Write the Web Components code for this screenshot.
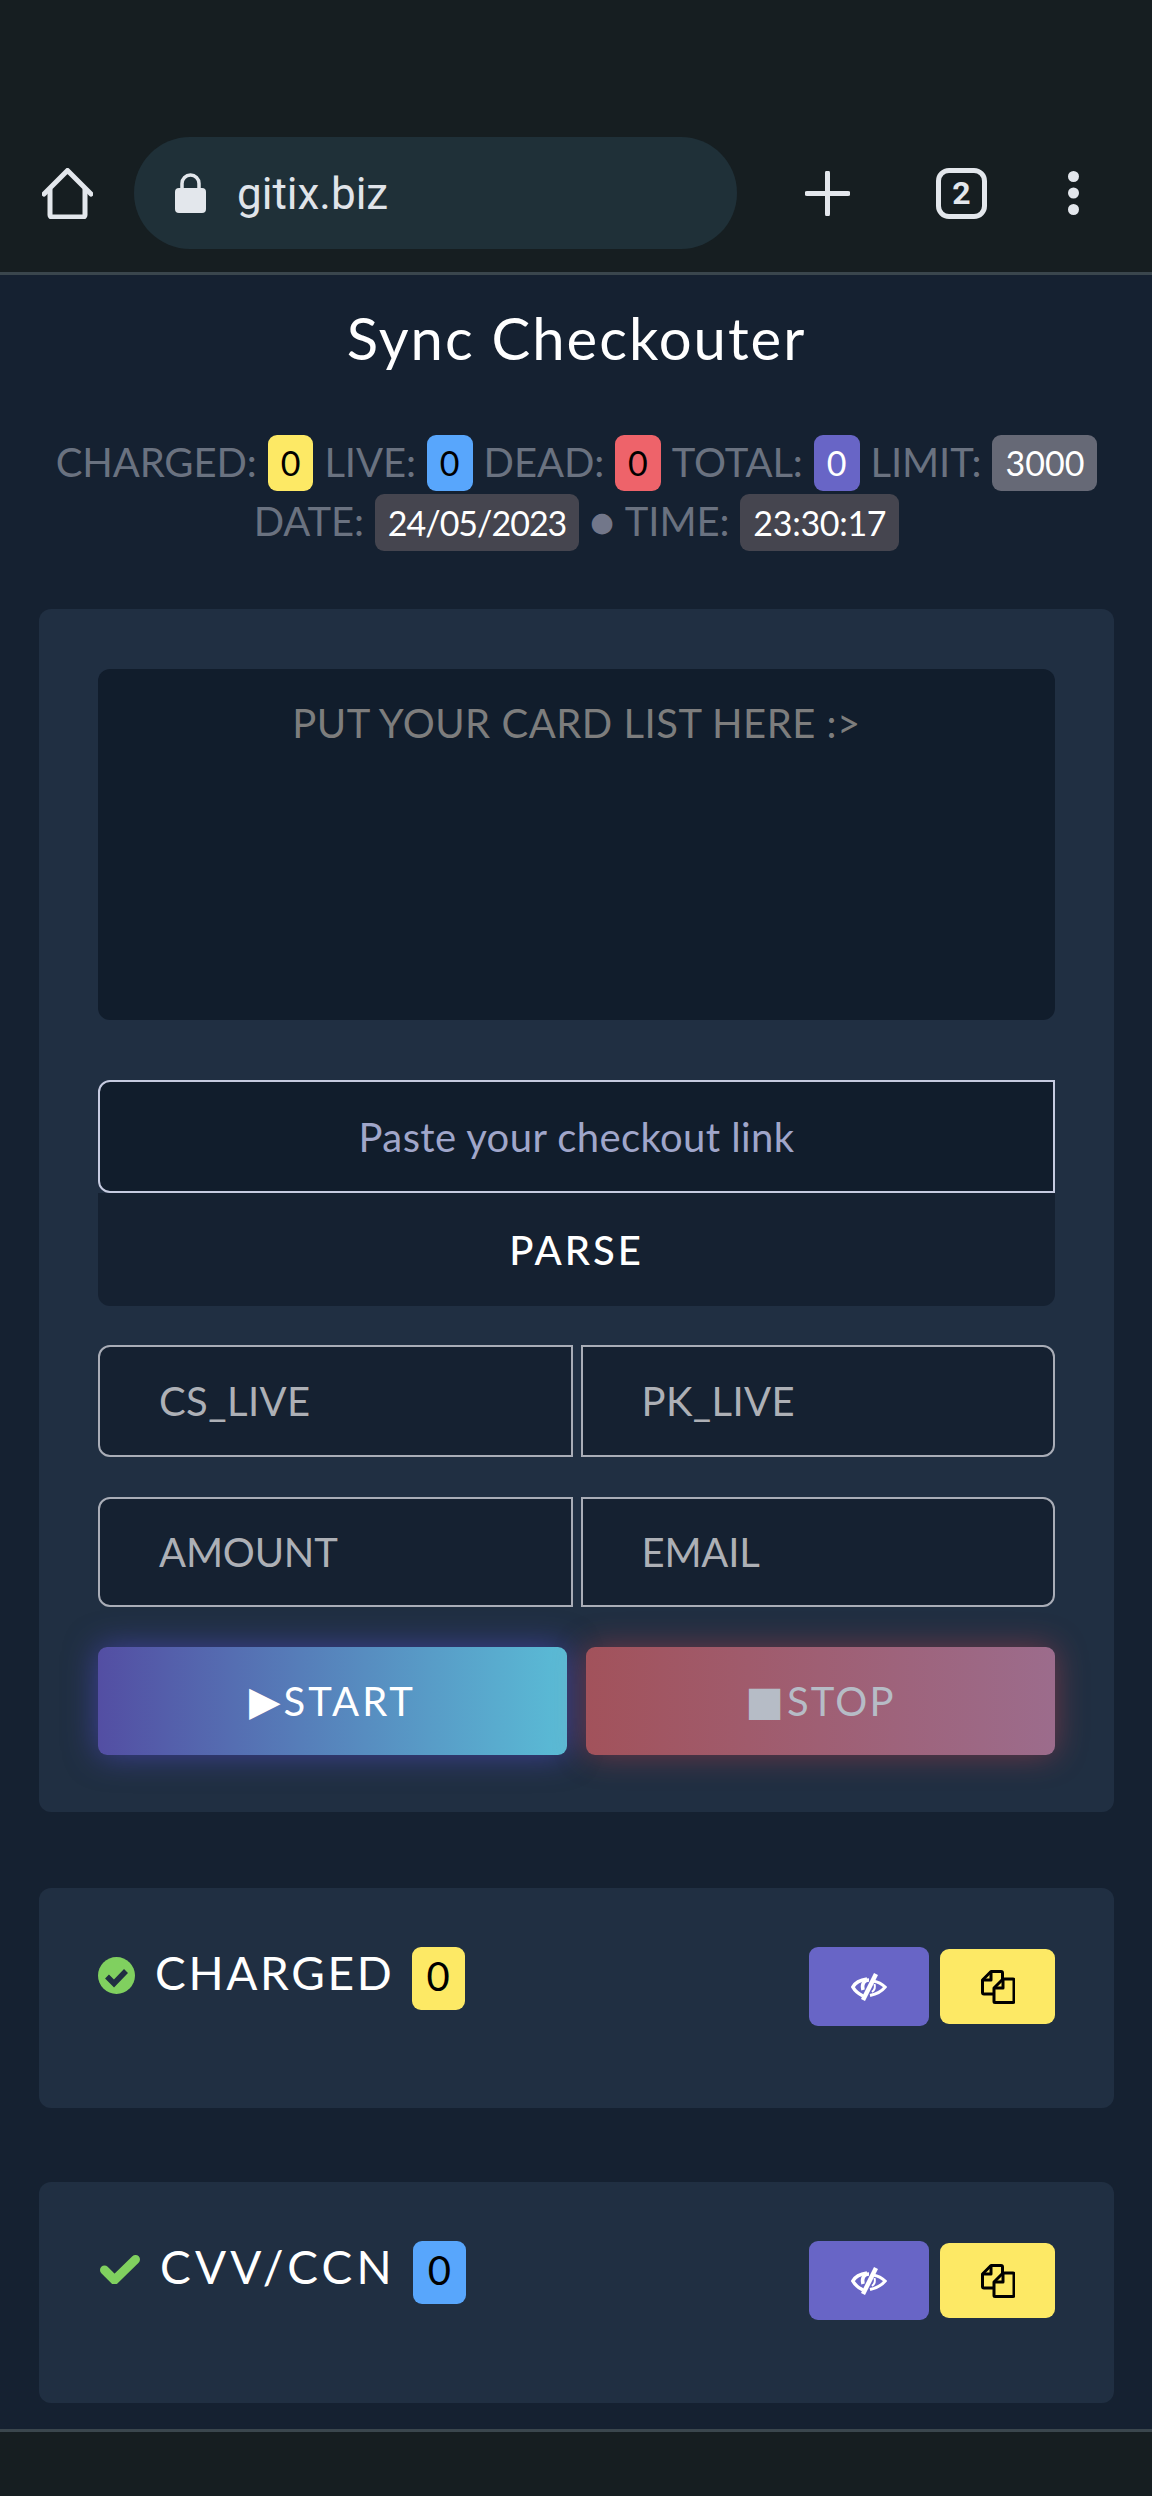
<!DOCTYPE html>
<html><head><meta charset="utf-8"><style>
html,body{margin:0;padding:0;background:#152131;}
body{width:1152px;height:2496px;overflow:hidden;display:flex;flex-direction:column;font-family:Lato,"Open Sans",sans-serif;font-weight:300;color:#fff;}
</style></head><body>
<browser-bar></browser-bar>
<main-page>
  <h-title>Sync Checkouter</h-title>
  <stat-row>
    <stat-label>CHARGED:</stat-label><stat-badge kind="yellow">0</stat-badge>
    <stat-label>LIVE:</stat-label><stat-badge kind="blue">0</stat-badge>
    <stat-label>DEAD:</stat-label><stat-badge kind="red">0</stat-badge>
    <stat-label>TOTAL:</stat-label><stat-badge kind="purple">0</stat-badge>
    <stat-label>LIMIT:</stat-label><stat-badge kind="gray">3000</stat-badge>
  </stat-row>
  <stat-row second>
    <stat-label>DATE:</stat-label><stat-badge kind="dark" style="letter-spacing:-1px">24/05/2023</stat-badge>
    <stat-label dot>●</stat-label>
    <stat-label>TIME:</stat-label><stat-badge kind="dark" style="letter-spacing:-.3px">23:30:17</stat-badge>
  </stat-row>
  <form-card></form-card>
  <result-panel icon="circle" label="CHARGED" ls="2.7" kind="yellow" style="margin-top:76px;height:220px"></result-panel>
  <result-panel icon="check" label="CVV/CCN" ls="4.2" kind="blue" style="margin-top:74px;height:221px"></result-panel>
</main-page>
<bottom-bar></bottom-bar>
<script>
function def(name,html,setup){customElements.define(name,class extends HTMLElement{constructor(){super();const r=this.attachShadow({mode:'open'});r.innerHTML=typeof html==='function'?html(this):html;}connectedCallback(){if(setup)setup(this);}});}

def('browser-bar',`<style>
:host{display:flex;align-items:flex-end;background:#161e21;border-bottom:3px solid #3a464d;flex:none;padding:0 0 23px 0;box-sizing:content-box;height:249px;color:#e3e7ec}
.wrap{display:flex;align-items:center;height:112px;width:100%}
svg{display:block;flex:none}
.home{margin-left:42px}
.pill{margin-left:41px;width:603px;height:112px;border-radius:56px;background:#1f3038;display:flex;align-items:center;box-sizing:border-box;padding-left:41px}
.url{font:400 44px Roboto,sans-serif;color:#e0e4ea;margin-left:31px;margin-top:2px}
.plus{margin-left:68px}.dots{margin-left:81px}
.tabs{margin-left:86px;width:51px;height:51px;border:5px solid #e3e7ec;border-radius:13px;box-sizing:border-box;display:flex;align-items:center;justify-content:center;font:700 32px Roboto,sans-serif;color:#e3e7ec;flex:none}
</style><div class="wrap">
<svg class="home" width="51" height="51" viewBox="0 0 51 51"><path d="M2 26 25.500 2.500 49 26" fill="none" stroke="#e3e7ec" stroke-width="5" stroke-linecap="round" stroke-linejoin="round"/><path d="M8 21v26a2 2 0 0 0 2 2h31a2 2 0 0 0 2-2V21" fill="none" stroke="#e3e7ec" stroke-width="5" stroke-linejoin="round"/></svg>
<div class="pill"><svg width="31" height="40" viewBox="0 0 31 40"><path d="M7 17V10.500a8.500 8.500 0 0 1 17 0V17" fill="none" stroke="#e3e7ec" stroke-width="3.500"/><rect x="0" y="15" width="31" height="25" rx="4" fill="#e3e7ec"/></svg><span class="url">gitix.biz</span></div>
<svg class="plus" width="45" height="45" viewBox="0 0 45 45"><path d="M22.500 2v41M2 22.500h41" stroke="#e3e7ec" stroke-width="5" stroke-linecap="round"/></svg>
<div class="tabs">2</div>
<svg class="dots" width="11" height="44" viewBox="0 0 11 44"><circle cx="5.500" cy="5.500" r="5.500" fill="#e3e7ec"/><circle cx="5.500" cy="22" r="5.500" fill="#e3e7ec"/><circle cx="5.500" cy="38.500" r="5.500" fill="#e3e7ec"/></svg>
</div>`);

def('main-page',`<style>:host{display:flex;flex-direction:column;flex:1;padding:0 38px 0 39px;min-height:0}</style><slot></slot>`);
def('bottom-bar',`<style>:host{display:block;background:#161e21;border-top:3px solid #3a464d;flex:none;box-sizing:content-box;height:64px}</style>`);
def('h-title',`<style>:host{display:block;text-align:center;font:400 58px/1 Lato,sans-serif;color:#fff;padding-top:34px;height:124px;box-sizing:border-box;letter-spacing:2px}</style><slot></slot>`);
def('stat-row',e=>`<style>:host{display:flex;justify-content:center;align-items:center;gap:11px;height:${e.hasAttribute('second')?57:56}px;margin-top:${e.hasAttribute('second')?3:36}px;margin-bottom:${e.hasAttribute('second')?58:0}px}</style><slot></slot>`);
def('stat-label',`<style>:host{display:block;font:400 40px/1 Lato,sans-serif;color:#6a7280;letter-spacing:-.1px;white-space:nowrap;padding-bottom:3px}</style><slot></slot>`,e=>{if(e.hasAttribute('dot')){e.style.cssText='font-size:27px;color:#72778a;font-family:"DejaVu Sans",sans-serif;padding:0 0 2px;margin:0'}});
const badge={yellow:['#fde965','#000'],blue:['#58a6fc','#000'],red:['#ee636a','#000'],purple:['#6865c6','#fff'],gray:['#666976','#fff'],dark:['#45454f','#fff']};
def('stat-badge',e=>{const[b,c]=badge[e.getAttribute('kind')];return `<style>:host{display:flex;align-items:center;justify-content:center;height:100%;min-width:45px;box-sizing:border-box;padding:0 13px;background:${b};color:${c};font:400 34px/1 Lato,sans-serif;border-radius:9px}</style><slot></slot>`});

def('form-card',`<style>
:host{display:flex;flex-direction:column;background:#202f42;border-radius:12px;height:1203px;box-sizing:border-box;padding:60px 59px 0 59px;font:400 40px/1 Lato,sans-serif}
.ta{height:351px;background:#111d2c;border-radius:12px;text-align:center;color:#7d7d7d;padding-top:34px;box-sizing:border-box;letter-spacing:.5px}
.link{margin-top:60px;height:113px;background:#111d2c;border:2.500px solid #c6cbe0;border-radius:12px 0 0 12px;box-sizing:border-box;display:flex;align-items:center;justify-content:center;color:#a0a6ca;letter-spacing:.4px}
.parse{height:113px;background:#152131;border-radius:0 0 12px 12px;display:flex;align-items:center;justify-content:center;font-weight:500;color:#fff;letter-spacing:3px}
.row{display:flex;gap:8px}
.row.a{margin-top:39px;height:112px}.row.b{margin-top:40px;height:110px}
.f{flex:1;background:#152131;border:2.500px solid #a9adb7;box-sizing:border-box;display:flex;align-items:center;padding-left:59px;color:#adb0b6;letter-spacing:.4px}
.row.b .f{letter-spacing:-.2px}
.f.l{border-radius:12px 0 0 12px}.f.r{border-radius:0 12px 12px 0}
.btns{display:flex;gap:19px;margin-top:40px;height:108px}
</style>
<div class="ta">PUT YOUR CARD LIST HERE :&gt;</div>
<div class="link">Paste your checkout link</div>
<div class="parse">PARSE</div>
<div class="row a"><div class="f l">CS_LIVE</div><div class="f r">PK_LIVE</div></div>
<div class="row b"><div class="f l">AMOUNT</div><div class="f r">EMAIL</div></div>
<div class="btns"><glow-btn kind="start" glyph="▶">START</glow-btn><glow-btn kind="stop" glyph="■">STOP</glow-btn></div>`);

def('glow-btn',e=>{const s=e.getAttribute('kind')==='start';return `<style>
:host{flex:1;display:flex;align-items:center;justify-content:center;border-radius:9px;font:400 40px/1 Lato,sans-serif;letter-spacing:${s?3:2.2}px;
background:${s?'linear-gradient(90deg,#534ea3,#5abcd6)':'linear-gradient(90deg,#a2525b,#9c6c8c)'};
box-shadow:0 0 32px ${s?'rgba(83,78,210,.6)':'rgba(225,70,80,.42)'};color:${s?'#fff':'#b6bcc6'}}
i{font:400 41px/1 "DejaVu Sans",sans-serif;letter-spacing:0;margin-right:3px}
</style><i>${e.getAttribute('glyph')}</i><slot></slot>`});

def('result-panel',e=>{const [b,c]=badge[e.getAttribute('kind')];const circle=e.getAttribute('icon')==='circle';
const ic=circle?`<svg width="37" height="37" viewBox="0 0 37 37" style="margin-right:20px"><circle cx="18.500" cy="18.500" r="18.500" fill="#80d05f"/><path d="M9 19.500l7 7 12-12.500" fill="none" stroke="#202f42" stroke-width="5.500"/></svg>`
:`<svg width="40" height="29" viewBox="0 0 40 29" style="margin-right:20px;margin-left:2px"><path d="M4.500 15l10 10L35.500 4.500" fill="none" stroke="#80d05f" stroke-width="9" stroke-linejoin="round" stroke-linecap="round"/></svg>`;
const eye=`<svg style="margin:0" width="36" height="28" viewBox="0 0 36 28"><path d="M16 6C9 7 4 10 1.800 14 4 18 8 21 12 23" fill="none" stroke="#fff" stroke-width="3.500"/><path d="M22 8c5 1 9 3 12.200 6C31 18 26 21 19 22.500" fill="none" stroke="#fff" stroke-width="3"/><path d="M25 1 12 27" stroke="#fff" stroke-width="4.500"/><path d="M18 7c-5 0-7.500 4-6 10" fill="none" stroke="#fff" stroke-width="3.500"/><path d="M23.500 11c1 3 0 6-2.500 8" fill="none" stroke="#fff" stroke-width="2"/></svg>`;
const copy=`<svg style="margin:0" width="34" height="34" viewBox="0 0 34 34"><path d="M12 24H3a1.500 1.500 0 0 1-1.500-1.500V10L10 1.500h10A1.500 1.500 0 0 1 21.500 3v6" fill="none" stroke="#000" stroke-width="3" stroke-linejoin="round"/><path d="M10 1.500V10H1.500" fill="none" stroke="#000" stroke-width="3" stroke-linejoin="round"/><path d="M22 9h10a1 1 0 0 1 1 1v21.500a1 1 0 0 1-1 1H14a1 1 0 0 1-1-1V18z" fill="none" stroke="#000" stroke-width="3" stroke-linejoin="round"/><path d="M22 9v9h-9" fill="none" stroke="#000" stroke-width="3" stroke-linejoin="round"/></svg>`;
return `<style>
:host{display:flex;justify-content:space-between;align-items:flex-start;background:#202f42;border-radius:12px;box-sizing:border-box;padding:59px 59px 0 59px;font:400 46px/1 Lato,sans-serif}
.l{display:flex;align-items:center;height:63px}
.t{letter-spacing:${e.getAttribute('ls')}px;color:#fff;margin-right:17px;margin-top:-11px}
svg{display:block;flex:none;margin-top:-6px}
.b{background:${b};color:${c};height:63px;min-width:53px;border-radius:9px;display:flex;align-items:center;justify-content:center;font:400 40px/1 Lato,sans-serif;padding-bottom:6px;box-sizing:border-box}
.r{display:flex;align-items:center;gap:11px}
.eye,.copy{display:flex;align-items:center;justify-content:center;border-radius:9px}
.eye{width:120px;height:79px;background:#6865c6}
.copy{width:115px;height:75px;background:#fde965}
</style>
<div class="l">${ic}<span class="t">${e.getAttribute('label')}</span><span class="b">0</span></div>
<div class="r"><div class="eye">${eye}</div><div class="copy">${copy}</div></div>`});
</script>
</body></html>
